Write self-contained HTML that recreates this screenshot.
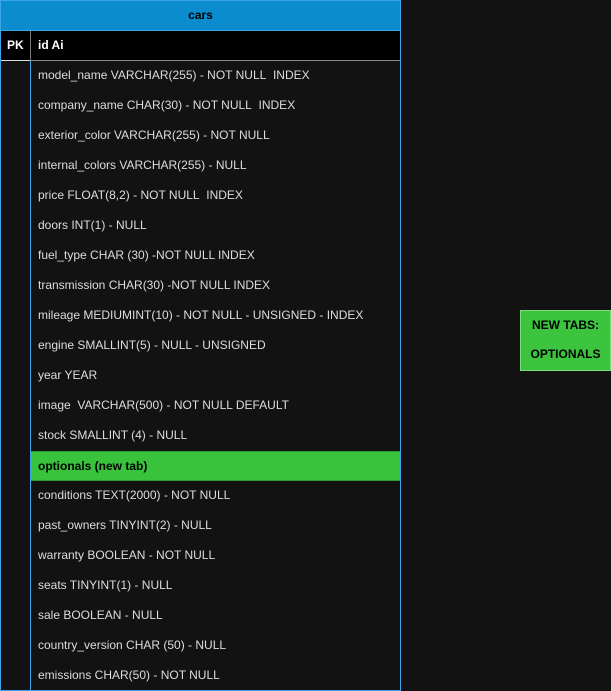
<!DOCTYPE html><html><head><style>
body{margin:0;background:#121212;width:611px;height:691px;overflow:hidden;font-family:"Liberation Sans",Arial,sans-serif;font-size:12px;position:relative}
.t{position:absolute;left:0;top:0;width:399px;height:689px;border:1px solid #3aa6e8;background:#121212}
.h{height:29px;background:#0a8ccf;color:#000;font-weight:bold;text-align:center;line-height:29px;border-bottom:1px solid #3aa6e8}
.pk{height:29px;background:#000;color:#fff;position:relative;border-bottom:1px solid #888;line-height:29px;font-weight:bold}
.pk span{position:absolute;left:6px}.pk b{position:absolute;left:37px}
.pk i{position:absolute;left:29px;top:0;bottom:0;border-left:1px solid #777}
.pk u{position:absolute;left:0;width:29px;bottom:-1px;border-bottom:1px solid #ddd}
.vl{position:absolute;left:29px;top:60px;bottom:0;border-left:1px solid #3aa6e8}
.r{height:30px;line-height:28px;padding-left:37px;color:#ddd;box-sizing:border-box}
.g{background:#39c33c;color:#000;font-weight:bold;margin-left:30px;padding-left:7px;height:30px;line-height:28px;border-top:1px solid #2a9a2c;border-bottom:1px solid #2a9a2c}
.n{position:absolute;left:520px;top:310px;width:89px;height:59px;background:#3cc43e;border:1px solid #7ddb7e;color:#000;font-weight:bold;text-align:center;line-height:29px}
</style></head><body>
<div class="t">
<div class="h">cars</div>
<div class="pk"><span>PK</span><i></i><u></u><b>id Ai</b></div>
<div class="vl"></div>
<div class="r">model_name VARCHAR(255) - NOT NULL&nbsp; INDEX</div>
<div class="r">company_name CHAR(30) - NOT NULL&nbsp; INDEX</div>
<div class="r">exterior_color VARCHAR(255) - NOT NULL</div>
<div class="r">internal_colors VARCHAR(255) - NULL</div>
<div class="r">price FLOAT(8,2) - NOT NULL&nbsp; INDEX</div>
<div class="r">doors INT(1) - NULL</div>
<div class="r">fuel_type CHAR (30) -NOT NULL INDEX</div>
<div class="r">transmission CHAR(30) -NOT NULL INDEX</div>
<div class="r">mileage MEDIUMINT(10) - NOT NULL - UNSIGNED - INDEX</div>
<div class="r">engine SMALLINT(5) - NULL - UNSIGNED</div>
<div class="r">year YEAR</div>
<div class="r">image&nbsp; VARCHAR(500) - NOT NULL DEFAULT</div>
<div class="r">stock SMALLINT (4) - NULL</div>
<div class="r g">optionals (new tab)</div>
<div class="r">conditions TEXT(2000) - NOT NULL</div>
<div class="r">past_owners TINYINT(2) - NULL</div>
<div class="r">warranty BOOLEAN - NOT NULL</div>
<div class="r">seats TINYINT(1) - NULL</div>
<div class="r">sale BOOLEAN - NULL</div>
<div class="r">country_version CHAR (50) - NULL</div>
<div class="r">emissions CHAR(50) - NOT NULL</div>
</div>
<div class="n">NEW TABS:<br>OPTIONALS</div>
</body></html>
